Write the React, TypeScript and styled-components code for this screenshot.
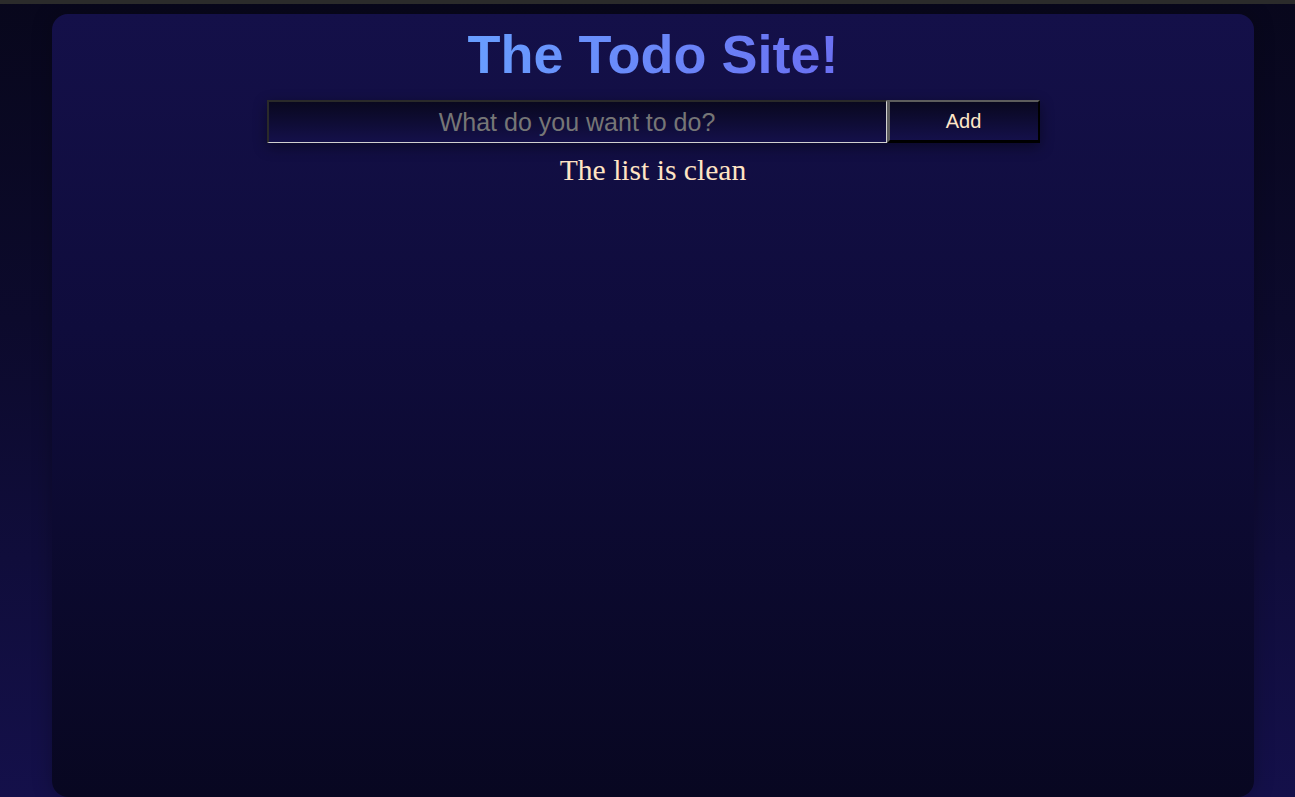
import React from "react";
import styled, { createGlobalStyle } from "styled-components";

const Global = createGlobalStyle`
  html, body { margin: 0; padding: 0; }
  body {
    min-height: 797px;
    background: linear-gradient(to bottom, #08071c 0%, #0c0a2c 40%, #14104a 100%);
    border-top: 4px solid #2b2b2b;
    box-sizing: border-box;
    overflow: hidden;
    font-family: "Liberation Serif", "Times New Roman", serif;
  }
`;

const Page = styled.div`
  padding: 10px 41px 0 52px;
  height: 793px;
  box-sizing: border-box;
  display: flex;
`;

const Card = styled.main`
  flex: 1;
  border-radius: 16px;
  background: linear-gradient(to bottom, #141049 0%, #0f0c3c 40%, #080721 100%);
  box-shadow: 0 0 20px rgba(0, 0, 0, 0.25);
  display: flex;
  flex-direction: column;
  align-items: center;
  height: 783px;
`;

const Title = styled.h1`
  margin: 8px 0 0;
  font-family: "Liberation Sans", Arial, sans-serif;
  font-weight: 700;
  font-size: 54px;
  line-height: 64px;
  background: linear-gradient(to right, #689eff, #6b70f2);
  -webkit-background-clip: text;
  background-clip: text;
  color: transparent;
`;

const Form = styled.form`
  margin-top: 14px;
  display: flex;
  box-shadow: 0 4px 14px rgba(0, 0, 0, 0.4);
`;

const Input = styled.input`
  width: 620px;
  height: 43px;
  box-sizing: border-box;
  border-style: solid;
  border-width: 2px 1px 1px 2px;
  border-color: #2a2a2a #d0d0d0 #d0d0d0 #2a2a2a;
  background: linear-gradient(to bottom, #09081f, #14104a);
  color: #ddd;
  text-align: center;
  font-family: "Liberation Sans", Arial, sans-serif;
  font-size: 25px;
  outline: none;
  &::placeholder { color: #767676; }
`;

const Button = styled.button`
  width: 153px;
  height: 43px;
  box-sizing: border-box;
  border-style: solid;
  border-width: 2px 2px 3px 3px;
  border-color: #5d5d5d #000 #000 #5d5d5d;
  background: linear-gradient(to bottom, #09081f, #14104a);
  color: #ffe6c8;
  font-family: "Liberation Sans", Arial, sans-serif;
  font-size: 20px;
  cursor: pointer;
`;

const Empty = styled.p`
  margin: 10px 0 0;
  color: #ffe4c4;
  font-size: 29.6px;
  line-height: 34px;
`;

export default function App() {
  return (
    <>
      <Global />
      <Page>
        <Card>
          <Title>The Todo Site!</Title>
          <Form onSubmit={(e) => e.preventDefault()}>
            <Input placeholder="What do you want to do?" />
            <Button type="submit">Add</Button>
          </Form>
          <Empty>The list is clean</Empty>
        </Card>
      </Page>
    </>
  );
}
